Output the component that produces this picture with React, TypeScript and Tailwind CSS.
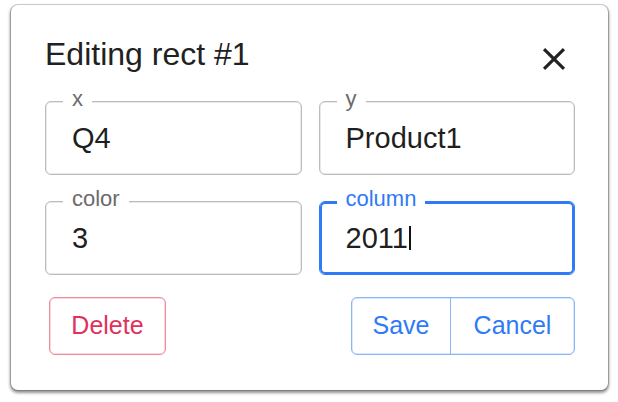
const font = { fontFamily: '"Liberation Sans", Arial, sans-serif' };

type FieldProps = { label: string; value: string; focused?: boolean };

function Field({ label, value, focused }: FieldProps) {
  return (
    <div
      className={
        focused
          ? "relative flex h-[74px] items-start rounded-[6px] border border-[#2f7af6] pl-[26px] pt-[20px] ring-2 ring-inset ring-[#2f7af6]"
          : "relative flex h-[74px] items-start rounded-[6px] border border-[#bcbcbc] pl-[26px] pt-[20px] shadow-[inset_0_0_0_0.5px_#d4d4d4]"
      }
    >
      <span
        className={
          focused
            ? "absolute -top-[14px] left-[17px] bg-white px-[9px] text-[22px] leading-[22px] text-[#2f7af6]"
            : "absolute -top-[14px] left-[17px] bg-white px-[9px] text-[22px] leading-[22px] text-[#6b6b6b]"
        }
      >
        {label}
      </span>
      <span className="flex items-center text-[29px] leading-[32px] text-[#1f1f1f]">
        {value}
        {focused && <span className="ml-[1px] inline-block h-[24px] w-[2px] bg-[#111]" />}
      </span>
    </div>
  );
}

export default function App() {
  return (
    <div className="h-[402px] w-[618px] bg-white pl-[11px] pt-[5px]" style={font}>
      <div className="h-[385px] w-[597px] rounded-[7px] bg-white pl-[34px] pr-[33px] pt-[31px] shadow-[0_0_0_1px_rgba(0,0,0,0.16),0_2px_3px_1px_rgba(0,0,0,0.42)]">
        <div className="flex h-[36px] items-start justify-between">
          <h2 className="text-[32px] leading-[36px] text-[#212121]">Editing rect #1</h2>
          <svg viewBox="0 0 24 24" className="mr-[2px] mt-[4px] h-[38px] w-[38px] shrink-0 fill-[#222]">
            <path d="M19 6.41 17.59 5 12 10.59 6.41 5 5 6.41 10.59 12 5 17.59 6.41 19 12 13.41 17.59 19 19 17.59 13.41 12z" />
          </svg>
        </div>

        <div className="mt-[29px] grid grid-cols-2 gap-x-[17px] gap-y-[26px]">
          <Field label="x" value="Q4" />
          <Field label="y" value="Product1" />
          <Field label="color" value="3" />
          <Field label="column" value="2011" focused />
        </div>

        <div className="mt-[22px] flex items-center justify-between">
          <button
            type="button"
            className="ml-[4px] flex h-[58px] w-[117px] items-center justify-center rounded-[6px] border border-[#ee8a9c] text-[25px] text-[#e0325d] shadow-[inset_0_0_0_0.5px_#f5b5c0]"
          >
            Delete
          </button>
          <div className="flex h-[58px] rounded-[6px] border border-[#8ab5f6] text-[25px] text-[#2f7af6] shadow-[inset_0_0_0_0.5px_#b5cff9]">
            <button type="button" className="flex w-[99px] items-center justify-center border-r border-[#8ab5f6]">
              Save
            </button>
            <button type="button" className="flex w-[123px] items-center justify-center">
              Cancel
            </button>
          </div>
        </div>
      </div>
    </div>
  );
}
